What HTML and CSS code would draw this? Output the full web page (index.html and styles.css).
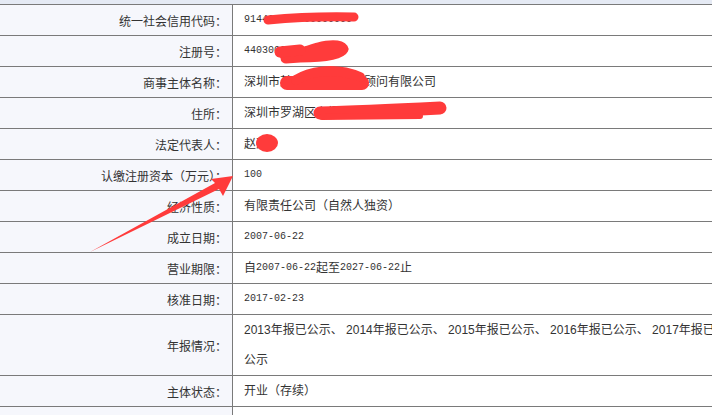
FILE: index.html
```html
<!DOCTYPE html>
<html lang="zh-CN">
<head>
<meta charset="utf-8">
<title>企业信息</title>
<link rel="stylesheet" href="styles.css">
</head>
<body>
<div class="page">
  <div class="band"></div>
  <div class="table">
    <div class="row"><div class="label">统一社会信用代码：</div><div class="value"><span class="num">914403000000000000</span></div></div>
    <div class="row"><div class="label">注册号：</div><div class="value"><span class="num">440300000000</span></div></div>
    <div class="row"><div class="label">商事主体名称：</div><div class="value">深圳市某某某企业管理顾问有限公司</div></div>
    <div class="row"><div class="label">住所：</div><div class="value">深圳市罗湖区东门街道某某路某号</div></div>
    <div class="row"><div class="label">法定代表人：</div><div class="value">赵某</div></div>
    <div class="row"><div class="label">认缴注册资本（万元）：</div><div class="value"><span class="num">100</span></div></div>
    <div class="row"><div class="label">经济性质：</div><div class="value">有限责任公司（自然人独资）</div></div>
    <div class="row"><div class="label">成立日期：</div><div class="value"><span class="num">2007-06-22</span></div></div>
    <div class="row"><div class="label">营业期限：</div><div class="value">自<span class="num">2007-06-22</span>起至<span class="num">2027-06-22</span>止</div></div>
    <div class="row"><div class="label">核准日期：</div><div class="value"><span class="num">2017-02-23</span></div></div>
    <div class="row tall"><div class="label">年报情况：</div><div class="value">2013年报已公示、 2014年报已公示、 2015年报已公示、 2016年报已公示、 2017年报已<br>公示</div></div>
    <div class="row"><div class="label">主体状态：</div><div class="value">开业（存续）</div></div>
    <div class="row"><div class="label"></div><div class="value"></div></div>
  </div>
  <svg class="marks" width="712" height="415" viewBox="0 0 712 415" aria-hidden="true">
    <g fill="none" stroke="#ff3b3b" stroke-linecap="round" stroke-linejoin="round">
      <path d="M268 20 Q 310 16 354 17" stroke-width="9"/>
      <path d="M283 53 C 296 55 306 52 318 48 C 330 45 340 45 343 49 C 340 55 320 57 300 57 L 286 58" stroke-width="11"/>
      <path d="M280 52 L 300 50" stroke-width="11"/>
      <path d="M287 83 L 362 83" stroke-width="14"/>
      <path d="M296 80 C 308 72 334 66 360 77" stroke-width="10"/>
      <path d="M320 113 C 360 112 400 110 440 108" stroke-width="13"/>
      <path d="M322 117 L 420 116" stroke-width="6"/>
    </g>
    <ellipse cx="267" cy="143" rx="11" ry="9" fill="#ff3b3b"/>
    <polygon points="90,252 215,183 211,179 233,176 223,196 219,189" fill="#ff3b3b"/>
  </svg>
</div>
</body>
</html>
```
FILE: styles.css
```css
html, body {
  margin: 0;
  padding: 0;
  background: #ffffff;
}
body {
  overflow: hidden;
  width: 712px;
  height: 415px;
}
.page {
  position: relative;
  width: 712px;
  height: 415px;
  overflow: hidden;
  font-family: "Liberation Sans", "Noto Sans CJK SC", sans-serif;
  font-size: 12px;
  color: #333333;
}
.band {
  height: 4px;
  background: #e5eaf4;
}
.table {
  width: 780px;
  border-top: 1px solid #7a7a7a;
}
.row {
  display: grid;
  grid-template-columns: 233px 1fr;
  border-bottom: 1px solid #7a7a7a;
  height: 30px;
}
.row.tall {
  height: 60px;
}
.label {
  box-sizing: border-box;
  background: #f6f7fc;
  border-right: 1px solid #7a7a7a;
  padding-right: 5px;
  display: flex;
  align-items: center;
  justify-content: flex-end;
  overflow: hidden;
}
.value {
  padding-left: 11px;
  line-height: 30px;
  white-space: nowrap;
  overflow: hidden;
}
.num {
  font-family: "Liberation Mono", monospace;
  font-size: 10px;
  vertical-align: top;
}
.marks {
  position: absolute;
  top: 0;
  left: 0;
  pointer-events: none;
}
```
